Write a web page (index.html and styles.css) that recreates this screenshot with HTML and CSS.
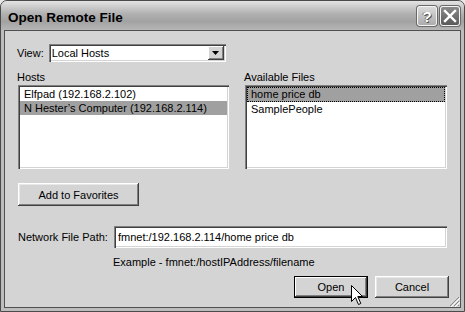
FILE: index.html
```html
<!DOCTYPE html>
<html>
<head>
<meta charset="utf-8">
<link rel="stylesheet" href="styles.css">
</head>
<body>
<div class="window">
  <div class="titlebar">
    <span class="title">Open Remote File</span>
    <div class="tbtns">
      <span class="tb help">?</span>
      <span class="tb close"><svg width="14" height="14" viewBox="0 0 14 14"><path d="M2 2 L12 12 M12 2 L2 12" stroke="#fff" stroke-width="2.4" stroke-linecap="square"/></svg></span>
    </div>
  </div>
  <div class="client">
    <div class="view-row">
      <span class="lbl">View:</span>
      <div class="select">
        <span class="sel-text">Local Hosts</span>
        <span class="sel-btn"><svg width="7" height="4" viewBox="0 0 7 4"><path d="M0 0 H7 L3.5 4 Z" fill="#000"/></svg></span>
      </div>
    </div>
    <div class="lists">
      <div class="col hosts">
        <div class="lbl">Hosts</div>
        <div class="listbox">
          <div class="item">Elfpad (192.168.2.102)</div>
          <div class="item sel">N Hester’s Computer (192.168.2.114)</div>
        </div>
      </div>
      <div class="col files">
        <div class="lbl">Available Files</div>
        <div class="listbox">
          <div class="item sel focus">home price db</div>
          <div class="item">SamplePeople</div>
        </div>
      </div>
    </div>
    <button class="btn fav">Add to Favorites</button>
    <div class="path-row">
      <span class="lbl plbl">Network File Path:</span>
      <div class="input">fmnet:/192.168.2.114/home price db</div>
    </div>
    <div class="example">Example - fmnet:/hostIPAddress/filename</div>
    <div class="actions">
      <button class="btn default">Open</button>
      <button class="btn">Cancel</button>
    </div>
    <svg class="cursor" width="13" height="21" viewBox="0 0 13 21"><path d="M0.5 0.5 L0.5 16.5 L4.5 12.5 L7.5 19.5 L9.8 18.5 L6.8 11.5 L11.5 11.5 Z" fill="#fff" stroke="#000" stroke-width="1"/></svg>
    <svg class="grip" width="11" height="11" viewBox="0 0 11 11"><path d="M10 1 L1 10 M10 5 L5 10 M10 9 L9 10" stroke="#888" stroke-width="1"/><path d="M11 2 L2 11 M11 6 L6 11" stroke="#fff" stroke-width="1"/></svg>
  </div>
</div>
</body>
</html>
```

FILE: styles.css
```css
* { box-sizing: border-box; }
html, body { margin: 0; padding: 0; }
body {
  width: 465px;
  height: 312px;
  background: #e8e8e8;
  font-family: "Liberation Sans", Arial, sans-serif;
  font-size: 11px;
  color: #000;
  overflow: hidden;
}
.window {
  width: 465px;
  height: 312px;
  border: 1px solid #4a4a4a;
  border-radius: 7px 7px 0 0;
  background: #bdbdbd;
  display: flex;
  flex-direction: column;
  overflow: hidden;
}
.titlebar {
  height: 29px;
  flex: none;
  display: flex;
  align-items: center;
  justify-content: space-between;
  padding: 0 4px 0 7px;
  background: linear-gradient(to bottom, #e4e4e4 0%, #d2d2d2 15%, #b0b0b0 45%, #a2a2a2 70%, #b6b6b6 100%);
}
.title {
  font-weight: bold;
  font-size: 13.5px;
  color: #000;
  padding-top: 3px;
}
.tbtns { display: flex; gap: 3px; padding-top: 1px; }
.tb {
  width: 20px;
  height: 20px;
  border-radius: 3px;
  border: 1px solid #f4f4f4;
  box-shadow: 0 0 0 1px #6a6a6a;
  display: flex;
  align-items: center;
  justify-content: center;
}
.help {
  background: linear-gradient(to bottom, #dadada, #acacac);
  color: #fff;
  font-weight: bold;
  font-size: 15px;
  text-shadow: 1px 1px 0 #555, -1px 0 0 #777;
}
.close {
  background: linear-gradient(to bottom, #8a8a8a, #5a5a5a);
}
.client {
  flex: 1;
  margin: 0 3px 3px 3px;
  border: 1px solid #505050;
  background: #d4d4d4;
  padding: 13px 11px 0 13px;
  position: relative;
}
.lbl { line-height: 13px; }
.view-row {
  display: flex;
  align-items: center;
  gap: 5px;
  margin-left: -1px;
  height: 18px;
}
.select {
  width: 177px;
  height: 18px;
  background: #fff;
  box-shadow: inset 1px 1px 0 #808080, inset 2px 2px 0 #404040, inset -1px -1px 0 #fff, inset -2px -2px 0 #d4d4d4;
  display: flex;
  align-items: center;
  justify-content: space-between;
  padding: 2px 2px 2px 3px;
}
.sel-text { line-height: 13px; }
.sel-btn {
  width: 16px;
  height: 14px;
  background: #d4d4d4;
  box-shadow: inset -1px -1px 0 #404040, inset 1px 1px 0 #fff, inset -2px -2px 0 #808080;
  display: flex;
  align-items: center;
  justify-content: center;
}
.lists {
  display: flex;
  gap: 16px;
  margin-top: 9px;
}
.col .lbl { margin-left: -1px; margin-bottom: 1px; }
.hosts { width: 211px; }
.files { width: 202px; }
.listbox {
  height: 84px;
  background: #fff;
  padding: 2px;
  box-shadow: inset 1px 1px 0 #808080, inset 2px 2px 0 #404040, inset -1px -1px 0 #fff, inset -2px -2px 0 #d4d4d4;
}
.item {
  height: 14px;
  line-height: 14px;
  padding-left: 4px;
  white-space: nowrap;
}
.item.sel { background: #a0a0a0; }
.item.focus { outline: 1px dotted #000; outline-offset: -1px; height: 15px; }
.btn {
  font-family: inherit;
  font-size: 11px;
  color: #000;
  background: #d4d4d4;
  border: none;
  height: 23px;
  padding: 0;
  box-shadow: inset -1px -1px 0 #404040, inset 1px 1px 0 #fff, inset -2px -2px 0 #808080, inset 2px 2px 0 #e8e8e8;
  display: block;
}
.fav {
  width: 121px;
  margin-top: 14px;
}
.path-row {
  display: flex;
  align-items: center;
  margin-top: 20px;
}
.plbl { width: 96px; flex: none; }
.input {
  width: 333px;
  height: 22px;
  background: #fff;
  line-height: 18px;
  padding: 2px 4px;
  box-shadow: inset 1px 1px 0 #808080, inset 2px 2px 0 #404040, inset -1px -1px 0 #fff, inset -2px -2px 0 #d4d4d4;
}
.example {
  margin-left: 95px;
  margin-top: 8px;
  line-height: 13px;
}
.actions {
  display: flex;
  justify-content: flex-end;
  gap: 7px;
  margin-top: 7px;
}
.actions .btn { width: 74px; height: 22px; }
.btn.default {
  box-shadow: inset 0 0 0 1px #000, inset -2px -2px 0 #404040, inset 2px 2px 0 #fff, inset -3px -3px 0 #808080;
}
.cursor {
  position: absolute;
  left: 346px;
  top: 254px;
}
.grip {
  position: absolute;
  right: 0;
  bottom: 0;
}
```
